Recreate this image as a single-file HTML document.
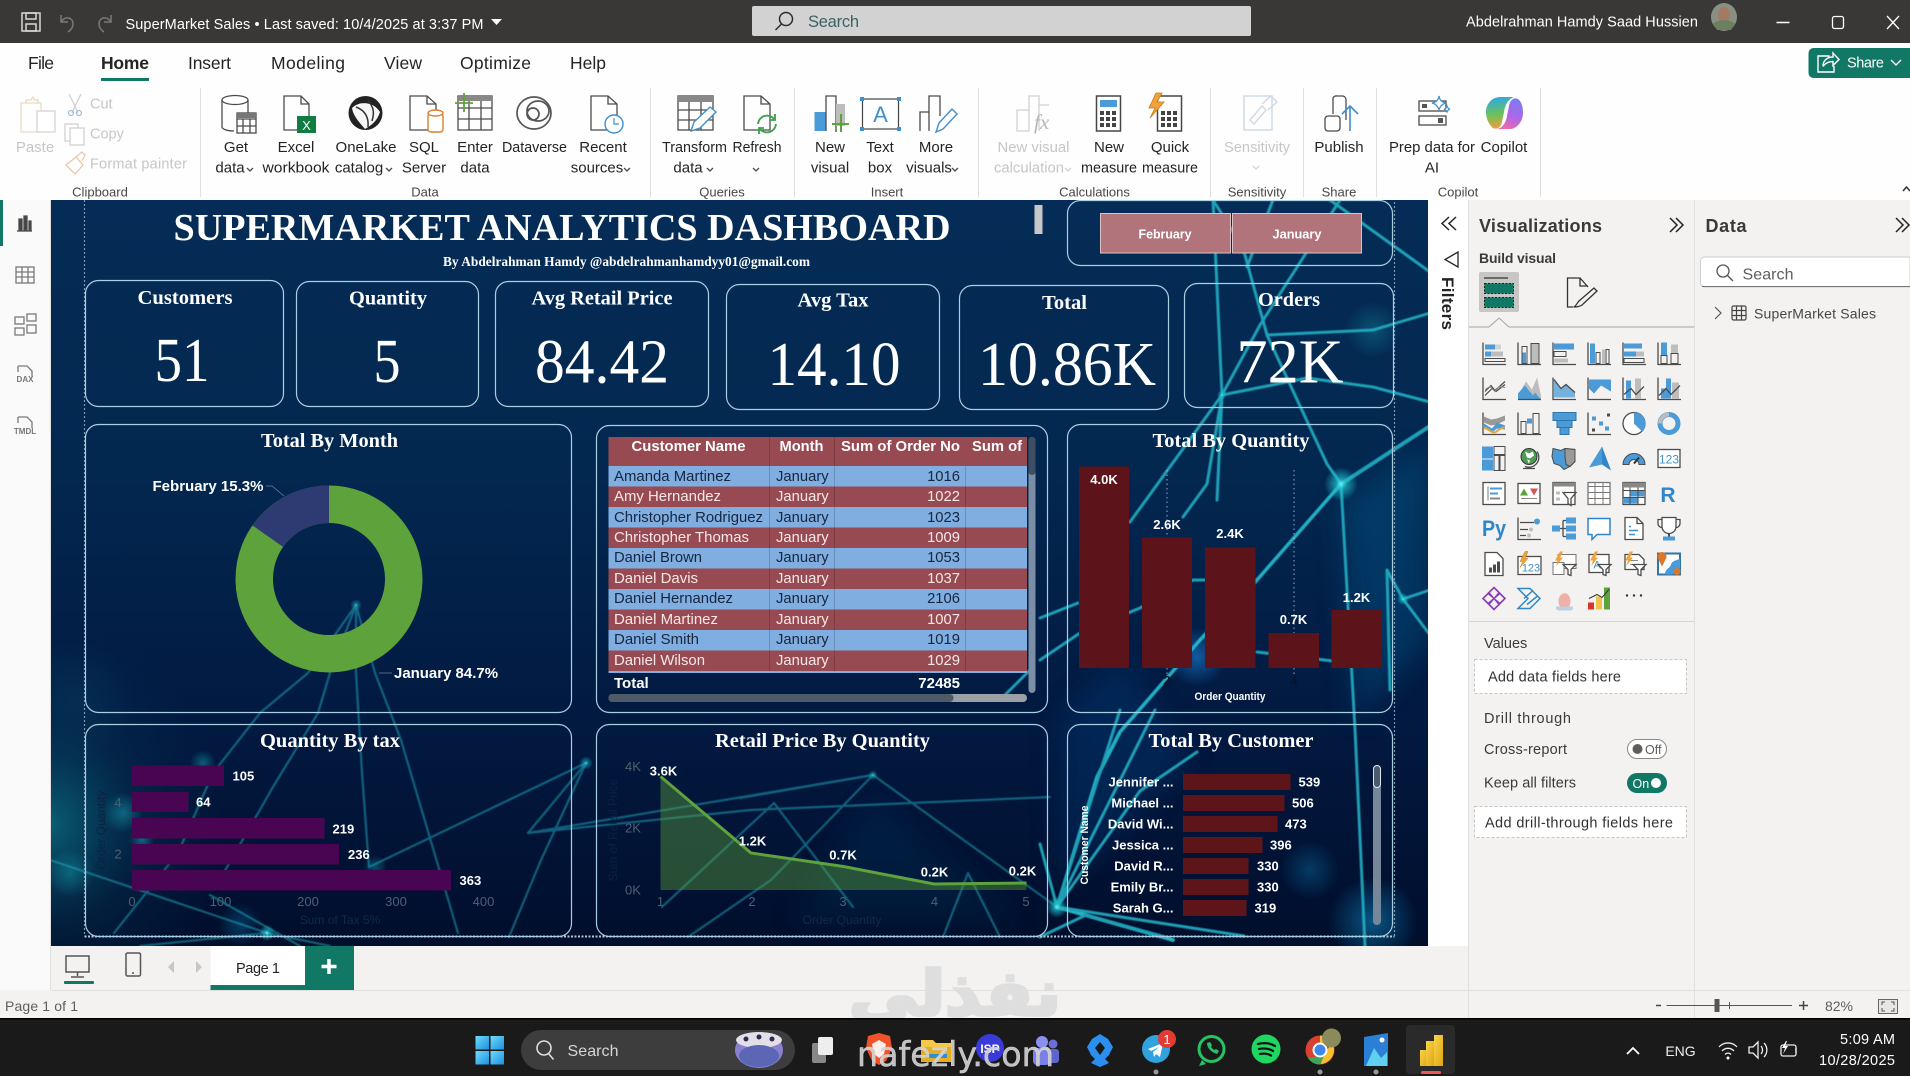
<!DOCTYPE html>
<html lang="en"><head><meta charset="utf-8"><title>SuperMarket Sales - Power BI</title>
<style>
html,body{margin:0;padding:0;background:#f3f2f1;overflow:hidden}
svg{display:block}
text{font-family:"Liberation Sans","Noto Sans CJK SC",sans-serif;fill:#252423}
.se{font-family:"Liberation Serif",serif;fill:#fff}
.seb{font-family:"Liberation Serif",serif;font-weight:700;fill:#fff}
.lb{font-weight:700;fill:#fff;font-size:13px}
.rb{font-size:15px;text-anchor:middle;fill:#252423}
.rd{font-size:15px;text-anchor:middle;fill:#c8c6c4}
.gl{font-size:13px;text-anchor:middle;fill:#484644}
.ax{font-size:13px;fill:#4c6172;text-anchor:middle}
.tn{font-size:14.8px;fill:#16263f}.tw{font-size:14.8px;fill:#f6e8e8}
.th{font-size:14.5px;font-weight:700;fill:#fff}
.e{text-anchor:end}.m{text-anchor:middle}
.b{fill:#4a9bd8}.g{fill:#bdbdbd}.dk{fill:#4b4b4b}
.k{fill:none;stroke:#4b4b4b;stroke-width:1.3}
.kb{fill:none;stroke:#3f8fcc;stroke-width:1.5}
.dis{fill:none;stroke:#d3d1cf;stroke-width:1.3}
.n{fill:none;stroke:#22aec2;stroke-linecap:round;stroke-linejoin:round}
.cd{fill:none;stroke:#a9cfe2;stroke-width:1.2}
</style></head><body>
<svg xmlns="http://www.w3.org/2000/svg" width="1910" height="1076" viewBox="0 0 1910 1076">
<defs>
<linearGradient id="bg" x1="0" y1="0" x2="0" y2="1"><stop offset="0" stop-color="#052c56"/><stop offset=".35" stop-color="#032850"/><stop offset=".68" stop-color="#021a42"/><stop offset="1" stop-color="#010e2c"/></linearGradient>
<radialGradient id="tl" cx="0" cy=".75" r=".42"><stop offset="0" stop-color="#0a6a7c" stop-opacity=".85"/><stop offset=".5" stop-color="#064a66" stop-opacity=".25"/><stop offset="1" stop-color="#03305a" stop-opacity="0"/></radialGradient>
<radialGradient id="glow"><stop offset="0" stop-color="#19b4c4" stop-opacity=".8"/><stop offset="1" stop-color="#19b4c4" stop-opacity="0"/></radialGradient>
<radialGradient id="glow2"><stop offset="0" stop-color="#0b6da0" stop-opacity=".75"/><stop offset="1" stop-color="#0b6da0" stop-opacity="0"/></radialGradient>
<radialGradient id="bl"><stop offset="0" stop-color="#1c86e0" stop-opacity=".85"/><stop offset="1" stop-color="#1c86e0" stop-opacity="0"/></radialGradient>
<radialGradient id="hot"><stop offset="0" stop-color="#5ff3f5"/><stop offset=".3" stop-color="#22c3cf" stop-opacity=".7"/><stop offset="1" stop-color="#22c3cf" stop-opacity="0"/></radialGradient>
<linearGradient id="cop" x1="0.3" y1="0" x2="0.4" y2="1"><stop offset="0" stop-color="#2ea7e8"/><stop offset=".55" stop-color="#6bc25a"/><stop offset="1" stop-color="#f59b3c"/></linearGradient>
<linearGradient id="cop2" x1="0.7" y1="0" x2="0.3" y2="1"><stop offset="0" stop-color="#7a7cf0"/><stop offset=".55" stop-color="#b065e8"/><stop offset="1" stop-color="#f06aa8"/></linearGradient>
<linearGradient id="win" x1="0" y1="0" x2="1" y2="1"><stop offset="0" stop-color="#6fdcf8"/><stop offset="1" stop-color="#1b8fe0"/></linearGradient>
<linearGradient id="pbi" x1="0" y1="0" x2="1" y2="1"><stop offset="0" stop-color="#f7d64a"/><stop offset="1" stop-color="#e2a412"/></linearGradient>
<filter id="sf" x="-5%" y="-5%" width="110%" height="110%"><feGaussianBlur stdDeviation=".55"/></filter>
<filter id="wash" x="-20%" y="-20%" width="140%" height="140%"><feGaussianBlur stdDeviation="14"/></filter>
<path id="ax" d="M1 1V23H24" fill="none" stroke="#4b4b4b" stroke-width="1.3"/>
<clipPath id="cv"><rect x="51" y="200" width="1377" height="746"/></clipPath>
</defs>

<!-- base panels -->
<rect width="1910" height="1076" fill="#f3f2f1"/>
<rect y="0" width="1910" height="43" fill="#3a3837"/>
<rect y="43" width="1910" height="157" fill="#fefefe"/>
<rect x="0" y="200" width="51" height="790" fill="#fafafa"/>
<rect x="1428" y="200" width="40" height="746" fill="#fff"/>
<path d="M1468.5 200V1018M1694.5 200V1018M50.5 200V990" stroke="#e1dfdd"/>

<!-- title bar -->
<g fill="none" stroke="#d8d8d8" stroke-width="1.5"><rect x="22" y="13" width="18" height="18"/><rect x="26" y="13" width="10" height="6"/><rect x="26" y="24" width="10" height="7"/></g>
<g fill="none" stroke="#7b7977" stroke-width="1.5"><path d="M61 15v7h7M62 21c3-5 11-4 11 3 0 3-2 6-5 8"/><path d="M111 15v7h-7M110 21c-3-5-11-4-11 3 0 3 2 6 5 8"/></g>
<text x="125.5" y="29" font-size="14.5" style="fill:#fff" textLength="358">SuperMarket Sales • Last saved: 10/4/2025 at 3:37 PM</text>
<path d="M491 19h11l-5.500 6z" fill="#fff"/>
<rect x="752" y="6" width="499" height="30" rx="2" fill="#d2d2d2"/>
<g fill="none" stroke="#2d2d2d" stroke-width="1.5"><circle cx="786" cy="19" r="6.500"/><path d="M781.500 24l-6 6"/></g>
<text x="808" y="27" font-size="16.5" style="fill:#3c6262" textLength="51">Search</text>
<text x="1466" y="26.500" font-size="14.500" style="fill:#fff" textLength="232">Abdelrahman Hamdy Saad Hussien</text>
<ellipse cx="1724" cy="17" rx="13" ry="14" fill="#8a8f83"/><ellipse cx="1724" cy="15" rx="6" ry="8" fill="#a57a63"/><path d="M1713 24c3-5 19-5 22 0l-4 6h-14z" fill="#6a8060"/>
<path d="M1776.500 22.500h13" stroke="#fff" stroke-width="1.500"/>
<rect x="1832.500" y="16.500" width="11" height="12" rx="2" fill="none" stroke="#fff" stroke-width="1.300"/>
<path d="M1887 16l12 13M1899 16l-12 13" stroke="#fff" stroke-width="1.300"/>

<!-- tabs -->
<g font-size="17.500">
<text x="28" y="69" textLength="26">File</text>
<text x="101" y="69" textLength="48" font-weight="700">Home</text>
<text x="188" y="69" textLength="43">Insert</text>
<text x="271" y="69" textLength="74">Modeling</text>
<text x="384" y="69" textLength="38">View</text>
<text x="460" y="69" textLength="71">Optimize</text>
<text x="570" y="69" textLength="36">Help</text>
</g>
<rect x="101" y="78" width="48" height="3" fill="#117865"/>
<path d="M1808.500 53a5 5 0 0 1 5-5H1910v30h-96.500a5 5 0 0 1-5-5z" fill="#117865"/>
<g fill="none" stroke="#fff" stroke-width="1.400"><path d="M1829 57v-1h-11v16h16v-6"/><path d="M1823 66c0-6 5-9 10-9v-4l6 6.500-6 6v-4c-5 0-8 2-10 5"/><path d="M1891 60l5 5 5-5"/></g>
<text x="1847" y="67.500" font-size="14.500" style="fill:#fff" textLength="37">Share</text>

<!-- ribbon separators -->
<path d="M200.500 88v109M650.500 88v109M794.500 88v109M978.500 88v109M1210.500 88v109M1303.500 88v109M1376.500 88v109M1540.500 88v109" stroke="#e1dfdd"/>
<!-- group labels -->
<text class="gl" x="100" y="196.500">Clipboard</text><text class="gl" x="425" y="196.500">Data</text><text class="gl" x="722" y="196.500">Queries</text><text class="gl" x="887" y="196.500">Insert</text><text class="gl" x="1094.500" y="196.500">Calculations</text><text class="gl" x="1257" y="196.500">Sensitivity</text><text class="gl" x="1339" y="196.500">Share</text><text class="gl" x="1458" y="196.500">Copilot</text>

<!-- ribbon: clipboard -->
<g class="dis"><rect x="21" y="103" width="20" height="29" style="stroke:#ecdcc4"/><rect x="37" y="111" width="18" height="21" style="stroke:#d6d4d2;fill:#fff"/><path d="M26 103v-3h5l2-3 2 3h3v3" style="stroke:#e9d9c0"/></g>
<text class="rd" x="35" y="152">Paste</text>
<g class="dis"><path d="M69 94l6 12 6-12M75 106l-3 7M75 106l3 7"/><circle cx="71" cy="113" r="2.500" style="stroke:#9dc3e0"/><circle cx="79" cy="113" r="2.500" style="stroke:#9dc3e0"/></g>
<text x="90" y="108.500" font-size="14.500" style="fill:#c8c6c4">Cut</text>
<g class="dis"><rect x="65" y="124" width="13" height="17"/><rect x="70" y="128" width="14" height="17" style="fill:#fff"/></g>
<text x="90" y="138.500" font-size="14.500" style="fill:#c8c6c4">Copy</text>
<g class="dis"><path d="M66 165l10-8 7 8-8 9zM76 157l6-5 3 3-3 6" style="stroke:#e4c9a8"/></g>
<text x="90" y="168.500" font-size="14.500" style="fill:#c8c6c4" textLength="97">Format painter</text>

<!-- data group icons -->
<g class="k"><ellipse cx="235" cy="100" rx="13" ry="4.500"/><path d="M222 100v27c0 2 5 4 12 4M248 100v13"/><rect x="237" y="113" width="19" height="20" fill="#fff"/><path d="M237 119h19M237 126h19M243 119v14M250 119v14"/><rect x="237" y="113" width="19" height="5" fill="#777" stroke="none"/></g>
<text class="rb" x="236" y="152">Get</text><text class="rb" x="230" y="172.500">data</text><path d="M247 168l3 3 3-3" class="k"/>
<g class="k"><path d="M284 96h17l8 8v26h-25zM301 96v8h8"/></g><rect x="297" y="116" width="19" height="17" fill="#107c41"/><text x="306.500" y="130" font-size="13" class="m" style="fill:#fff">X</text>
<text class="rb" x="296" y="152">Excel</text><text class="rb" x="296" y="172.500" textLength="67" lengthAdjust="spacingAndGlyphs">workbook</text>
<circle cx="365.500" cy="113" r="17" fill="#222"/><path d="M352 108c8-8 22-6 28 4-3 10-10 14-15 17-5-6-12-13-13-21z" fill="#f6f6f6"/><path d="M356 107c8 3 13 9 12 20M368 100c5 7 7 11 4 21" stroke="#333" stroke-width="1.500" fill="none"/>
<text class="rb" x="366" y="152">OneLake</text><text class="rb" x="359" y="172.500">catalog</text><path d="M386 168l3 3 3-3" class="k"/>
<g class="k"><path d="M410 96h17l9 8v26h-26zM427 96v8h9"/></g><g fill="#fff" stroke="#d9822b" stroke-width="1.400"><rect x="428" y="113" width="15" height="19" rx="3"/><ellipse cx="435.500" cy="113" rx="7.500" ry="3"/></g>
<text class="rb" x="424" y="152">SQL</text><text class="rb" x="424" y="172.500">Server</text>
<g class="k"><rect x="458" y="96" width="34" height="34"/><path d="M458 108h34M458 119h34M469 96v34M481 96v34"/></g><rect x="458" y="96" width="34" height="5" fill="#8a8886"/><path d="M464 93v19M455 103h18" stroke="#5ea23b" stroke-width="1.800"/>
<text class="rb" x="475" y="152">Enter</text><text class="rb" x="475" y="172.500">data</text>
<g fill="none" stroke="#555" stroke-width="1.700"><ellipse cx="534" cy="113" rx="17" ry="16"/><ellipse cx="538" cy="111" rx="11" ry="10"/><ellipse cx="533" cy="114" rx="6" ry="6"/></g>
<text class="rb" x="534.500" y="152" textLength="65" lengthAdjust="spacingAndGlyphs">Dataverse</text>
<g class="k"><path d="M591 96h17l9 8v26h-26zM608 96v8h9"/></g><circle cx="614" cy="124" r="9" fill="#fff" stroke="#3f8fcc" stroke-width="1.400"/><path d="M614 118v6h5" stroke="#3f8fcc" fill="none" stroke-width="1.200"/>
<text class="rb" x="603" y="152">Recent</text><text class="rb" x="597" y="172.500">sources</text><path d="M624 168l3 3 3-3" class="k"/>
<!-- queries -->
<g class="k"><rect x="678" y="96" width="35" height="34"/><path d="M678 110h35M678 120h35M689 102v28M701 102v28"/></g><rect x="678" y="96" width="35" height="6" fill="#8a8886"/><path d="M691 131l3-9 16-15 6 5-16 16z" fill="#fff" stroke="#3f8fcc" stroke-width="1.400"/>
<text class="rb" x="694.500" y="152" textLength="65" lengthAdjust="spacingAndGlyphs">Transform</text><text class="rb" x="688" y="172.500">data</text><path d="M707 168l3 3 3-3" class="k"/>
<g class="k"><path d="M744 96h17l9 8v26h-26zM761 96v8h9"/></g><g fill="none" stroke="#3aa14a" stroke-width="1.800"><path d="M758 124a9 9 0 0 1 16-5M776 124a9 9 0 0 1-16 5"/><path d="M775 114v6h-5M759 134v-6h5"/></g>
<text class="rb" x="757" y="152" textLength="49" lengthAdjust="spacingAndGlyphs">Refresh</text><path d="M753 168l3 3 3-3" class="k"/>
<!-- insert -->
<rect x="814.500" y="112" width="12" height="19" fill="#4a9bd8"/><g class="k"><path d="M826 131V96h10v36"/></g><rect x="836" y="104" width="9" height="22" fill="#bdbdbd"/><path d="M841 114v18M832 124h17" stroke="#5ea23b" stroke-width="2"/>
<text class="rb" x="830" y="152">New</text><text class="rb" x="830" y="172.500">visual</text>
<rect x="862.500" y="99" width="36" height="30" fill="#fff" stroke="#444" stroke-width="1.200"/><g fill="#3f8fcc"><rect x="860" y="97" width="4" height="4"/><rect x="897" y="97" width="4" height="4"/><rect x="860" y="127" width="4" height="4"/><rect x="897" y="127" width="4" height="4"/></g>
<text x="880.500" y="122" font-size="22" class="m" style="fill:#3f8fcc">A</text>
<text class="rb" x="880" y="152">Text</text><text class="rb" x="880" y="172.500">box</text>
<g class="k"><path d="M920 131v-19h9M929 131V96h11v20"/></g><path d="M936 132l3-9 13-14 5 5-14 15z" fill="#fff" stroke="#3f8fcc" stroke-width="1.400"/>
<text class="rb" x="936" y="152">More</text><text class="rb" x="929" y="172.500">visuals</text><path d="M952 168l3 3 3-3" class="k"/>
<!-- calculations -->
<g class="dis"><path d="M1017 131v-21h12v21zM1029 110V96h10v35M1039 105h10"/></g><text x="1034" y="129" font-size="21" class="se" font-style="italic" style="fill:#b8b6b4">fx</text>
<text class="rd" x="1033.500" y="152" textLength="72" lengthAdjust="spacingAndGlyphs">New visual</text><text class="rd" x="1029" y="172.500" textLength="70" lengthAdjust="spacingAndGlyphs">calculation</text><path d="M1065 168l3 3 3-3" class="dis"/>
<g><rect x="1096.500" y="96" width="24" height="35" fill="#fff" stroke="#484644" stroke-width="1.500"/><rect x="1100" y="100" width="17" height="7" fill="#4a9bd8"/><g fill="#444"><rect x="1100" y="111" width="4" height="4"/><rect x="1106" y="111" width="4" height="4"/><rect x="1112" y="111" width="4" height="4"/><rect x="1100" y="117" width="4" height="4"/><rect x="1106" y="117" width="4" height="4"/><rect x="1112" y="117" width="4" height="4"/><rect x="1100" y="123" width="4" height="4"/><rect x="1106" y="123" width="4" height="4"/><rect x="1112" y="123" width="4" height="4"/></g></g>
<text class="rb" x="1109" y="152">New</text><text class="rb" x="1109" y="172.500" textLength="56" lengthAdjust="spacingAndGlyphs">measure</text>
<g><rect x="1157.500" y="96" width="24" height="35" fill="#fff" stroke="#484644" stroke-width="1.500"/><g fill="#444"><rect x="1161" y="111" width="4" height="4"/><rect x="1167" y="111" width="4" height="4"/><rect x="1173" y="111" width="4" height="4"/><rect x="1161" y="117" width="4" height="4"/><rect x="1167" y="117" width="4" height="4"/><rect x="1173" y="117" width="4" height="4"/><rect x="1161" y="123" width="4" height="4"/><rect x="1167" y="123" width="4" height="4"/><rect x="1173" y="123" width="4" height="4"/></g><path d="M1156 93l-7 15h6l-5 10 14-16h-7l5-9z" fill="#f2a23c" stroke="#c87a14" stroke-width=".8"/></g>
<text class="rb" x="1170" y="152">Quick</text><text class="rb" x="1170" y="172.500" textLength="56" lengthAdjust="spacingAndGlyphs">measure</text>
<!-- sensitivity -->
<g fill="none" stroke="#cfdbe6" stroke-width="1.500"><rect x="1244" y="96" width="28" height="34"/><path d="M1250 120l12-14 4 4-12 14zM1262 104l9-8 6 6-9 8"/></g>
<text class="rd" x="1257" y="152" textLength="66" lengthAdjust="spacingAndGlyphs">Sensitivity</text><path d="M1253 166l3 3 3-3" class="dis"/>
<!-- share -->
<g class="k"><path d="M1333 114V98a4 4 0 0 1 4-2h6a4 4 0 0 1 3 4v20"/><rect x="1325" y="116" width="15" height="15" rx="3"/></g><path d="M1350 131v-25M1342 114l8-8 8 8" fill="none" stroke="#3f8fcc" stroke-width="1.600"/>
<text class="rb" x="1339" y="152">Publish</text>
<!-- copilot -->
<g class="k"><rect x="1419" y="101" width="27" height="10"/><rect x="1419" y="116" width="27" height="9"/></g><rect x="1422" y="104" width="5" height="4" fill="#555"/><rect x="1438" y="118" width="5" height="5" fill="#555"/><path d="M1439 96c1 5 3 6 7 7-4 1-6 3-7 7-1-4-3-6-7-7 4-1 6-2 7-7zM1447 106c.6 2 1.500 3 3 3-1.500.6-2.400 1.500-3 3-.6-1.500-1.500-2.400-3-3 1.500 0 2.400-1 3-3z" fill="#fff" stroke="#3f8fcc" stroke-width="1.200"/>
<text class="rb" x="1432" y="152" textLength="86" lengthAdjust="spacingAndGlyphs">Prep data for</text><text class="rb" x="1432" y="172.500">AI</text>
<path d="M1500 97H1514C1508 99 1505 105 1504 112L1502 122C1501 127 1497 130 1493 128 1488 124 1486 117 1486 112 1486 104 1492 97 1500 97z" fill="url(#cop)"/>
<path d="M1510 129H1497C1503 128 1506 122 1507 116L1509 106C1510 100 1514 97 1518 99 1522 102 1523 108 1523 113 1523 121 1517 129 1510 129z" fill="url(#cop2)"/>
<text class="rb" x="1504" y="152">Copilot</text>
<path d="M1903 191l3.500-4 3.500 4" fill="none" stroke="#333" stroke-width="1.500"/>

<!-- left nav -->
<rect x="0" y="200" width="3" height="46" fill="#117865"/>
<g class="k"><path d="M17 231h15"/><path d="M19 219h3v11h-3zM24 216h3v14h-3zM29 221h2v9h-2z" fill="#444"/></g>
<g class="k" style="stroke:#7a7a7a"><rect x="16" y="267" width="18" height="16"/><path d="M16 272h18M16 277h18M22 267v16M28 267v16"/></g>
<g class="k" style="stroke:#7a7a7a"><rect x="15" y="317" width="9" height="7"/><rect x="27" y="314" width="9" height="7"/><rect x="15" y="328" width="9" height="7"/><rect x="27" y="325" width="9" height="8"/></g>
<g class="k" style="stroke:#7a7a7a"><path d="M18 366h9l5 5v6M18 366v6"/></g><text x="25" y="382" font-size="8" class="m" font-weight="700" style="fill:#777">DAX</text>
<g class="k" style="stroke:#7a7a7a"><path d="M18 417h9l5 5v6M18 417v6"/></g><text x="25" y="434" font-size="8" class="m" font-weight="700" style="fill:#777">TMDL</text>

<!-- CANVAS -->
<g clip-path="url(#cv)">
<rect x="51" y="200" width="1377" height="746" fill="url(#bg)"/>
<rect x="51" y="460" width="420" height="486" fill="url(#tl)"/>
<!-- soft colour washes -->
<g filter="url(#wash)">
<path d="M1341 500L1428 450V640L1355 720z" fill="#0d6aa0" opacity=".3"/>
<path d="M1057 890L1190 760 1120 660 1060 720V880z" fill="#0650a0" opacity=".22"/>
<path d="M873 800L1020 920 790 920z" fill="#0b5f8a" opacity=".12"/>
</g>
<circle cx="1373" cy="921" r="45" fill="url(#glow2)"/>
<circle cx="1310" cy="870" r="30" fill="url(#glow2)" opacity=".6"/>
<circle cx="1197" cy="657" r="30" fill="url(#bl)" opacity=".7"/>
<circle cx="1373" cy="330" r="28" fill="url(#glow)" opacity=".35"/>
<circle cx="203" cy="763" r="13" fill="url(#glow)" opacity=".55"/><circle cx="123" cy="813" r="20" fill="url(#glow)" opacity=".55"/><circle cx="142" cy="840" r="12" fill="url(#glow)" opacity=".6"/><circle cx="70" cy="873" r="24" fill="url(#glow)" opacity=".45"/><circle cx="75" cy="700" r="60" fill="url(#glow)" opacity=".1"/><circle cx="240" cy="925" r="22" fill="url(#glow2)" opacity=".6"/><circle cx="375" cy="867" r="12" fill="url(#glow)" opacity=".45"/>
<!-- network right -->
<g class="n" stroke-width="3" opacity=".9" filter="url(#sf)">
<path d="M1341 484L1430 426" stroke-width="4"/>
<path d="M1341 484L1257 580 1200 640 1120 732 1097 777 1057 907" stroke-width="3.600" style="stroke:#28bfd0"/>
<path d="M1341 484L1327 464 1267 335 1243 248 1213 200"/>
<path d="M1341 484L1355 729 1365 946"/>
<path d="M1387 570L1403 599 1430 635M1403 599L1430 590M1387 570L1390 690"/>
<path d="M1222 395L1307 378 1373 387 1430 402"/>
<path d="M1222 395L1130 522M1222 395L1260 325 1340 200M1222 395L1207 484 1183 517M1222 395L1213 200M1222 395L1217 500"/>
<path d="M1040 618L1078 603M1040 660L1080 633 1140 608 1193 580 1250 580"/>
<path d="M1273 200L1247 267M1330 200L1430 272M1373 330L1430 313M1373 330L1267 335"/>
<path d="M1057 907L1173 940" stroke-width="3.800" style="stroke:#2cc6d6"/>
<path d="M1057 907L1040 844M1057 907L1140 791 1197 752M1057 907L1155 710M1057 907L1120 710M1057 907L1244 936"/>
<path d="M1257 652L1333 661M1086 915L1040 937M1086 915L1165 937M1000 700L1030 670"/>
</g>
<!-- network left/centre -->
<g class="n" stroke-width="2.200" opacity=".5" filter="url(#sf)">
<path d="M356 605L308 673 260 713 213 773 178 853 114 933"/>
<path d="M356 605L330 673 318 713 273 787 215 888"/>
<path d="M356 605L356 673 362 773 369 867"/>
<path d="M356 605L375 673 401 740 458 933"/>
<path d="M586 763L528 833M586 763L369 867M586 763L541 860 509 937"/>
<path d="M528 833L873 775M528 833L750 810 1050 797"/>
<path d="M873 775L740 798M873 775L771 880 688 937M873 775L1057 907"/>
<path d="M774 803L662 907M774 803L853 907M968 873L943 937M968 873L1000 937"/>
<path d="M50 860L267 933M267 933L140 946M267 933L330 946M210 895L300 946"/>
</g>
<circle cx="1341" cy="484" r="17" fill="url(#hot)"/><circle cx="1057" cy="907" r="11" fill="url(#hot)"/><circle cx="873" cy="775" r="5" fill="url(#hot)" opacity=".7"/><circle cx="586" cy="763" r="7" fill="url(#hot)" opacity=".7"/><circle cx="356" cy="605" r="6" fill="url(#hot)" opacity=".6"/><circle cx="1222" cy="395" r="5" fill="url(#hot)"/><circle cx="267" cy="933" r="8" fill="url(#hot)"/><circle cx="1403" cy="599" r="6" fill="url(#hot)"/>

<!-- dotted page bounds -->
<path d="M84.500 200V936M1394.500 936V200" fill="none" stroke="#a9b8c6" stroke-width="1.200" stroke-dasharray="2 2" opacity=".75"/>
<path d="M84.500 936.500H1394.500" fill="none" stroke="#b9c4cf" stroke-width="2" stroke-dasharray="2 1.500"/>

<!-- cards -->
<g class="cd">
<rect x="85.500" y="280.500" width="198" height="126" rx="13"/>
<rect x="296.500" y="281.500" width="182" height="125" rx="13"/>
<rect x="495.500" y="281.500" width="213" height="125" rx="13"/>
<rect x="726.500" y="284.500" width="213" height="125" rx="13"/>
<rect x="959.500" y="285.500" width="209" height="124" rx="13"/>
<rect x="1184.500" y="283.500" width="209" height="124" rx="13"/>
<rect x="85.500" y="424.500" width="486" height="288" rx="13"/>
<rect x="596.500" y="425.500" width="451" height="287" rx="13"/>
<rect x="1067.500" y="424.500" width="325" height="288" rx="13"/>
<rect x="1067.500" y="200.500" width="325" height="65" rx="13"/>
<rect x="85.500" y="724.500" width="486" height="212" rx="13"/>
<rect x="596.500" y="724.500" width="451" height="212" rx="13"/>
<rect x="1067.500" y="724.500" width="325" height="212" rx="13"/>
</g>

<!-- title -->
<text class="seb" x="173.500" y="240" font-size="38" textLength="777" lengthAdjust="spacingAndGlyphs">SUPERMARKET ANALYTICS DASHBOARD</text>
<text class="seb" x="443" y="266" font-size="14" textLength="367" lengthAdjust="spacingAndGlyphs">By Abdelrahman Hamdy @abdelrahmanhamdyy01@gmail.com</text>
<rect x="1034.500" y="205" width="8" height="29" fill="#c8c8c8"/>
<rect x="1100.500" y="213.500" width="130" height="39.500" fill="#b1747a" stroke="#d9c3c6"/>
<rect x="1232.500" y="213.500" width="129" height="39.500" fill="#b1747a" stroke="#d9c3c6"/>
<text class="lb m" x="1165" y="238.500" textLength="53" lengthAdjust="spacingAndGlyphs">February</text>
<text class="lb m" x="1297" y="238.500" textLength="49" lengthAdjust="spacingAndGlyphs">January</text>

<!-- KPI -->
<text class="seb m" x="185" y="304" font-size="20" textLength="95" lengthAdjust="spacingAndGlyphs">Customers</text>
<text class="seb m" x="388" y="304.500" font-size="20" textLength="78" lengthAdjust="spacingAndGlyphs">Quantity</text>
<text class="seb m" x="602" y="304.500" font-size="20" textLength="141" lengthAdjust="spacingAndGlyphs">Avg Retail Price</text>
<text class="seb m" x="833" y="306.500" font-size="20" textLength="71" lengthAdjust="spacingAndGlyphs">Avg Tax</text>
<text class="seb m" x="1064.500" y="309" font-size="20" textLength="45" lengthAdjust="spacingAndGlyphs">Total</text>
<text class="seb m" x="1289" y="306" font-size="20" textLength="62" lengthAdjust="spacingAndGlyphs">Orders</text>
<text class="se m" x="182" y="381" font-size="62" textLength="55" lengthAdjust="spacingAndGlyphs">51</text>
<text class="se m" x="387" y="382" font-size="62" textLength="27" lengthAdjust="spacingAndGlyphs">5</text>
<text class="se m" x="602" y="382.500" font-size="62" textLength="134" lengthAdjust="spacingAndGlyphs">84.42</text>
<text class="se m" x="834" y="385" font-size="62" textLength="133" lengthAdjust="spacingAndGlyphs">14.10</text>
<text class="se m" x="1067" y="385" font-size="62" textLength="178" lengthAdjust="spacingAndGlyphs">10.86K</text>
<text class="se m" x="1290" y="382.500" font-size="62" textLength="107" lengthAdjust="spacingAndGlyphs">72K</text>

<!-- donut -->
<text class="seb m" x="329.500" y="447" font-size="20" textLength="137" lengthAdjust="spacingAndGlyphs">Total By Month</text>
<circle cx="329" cy="579" r="74.750" fill="none" stroke="#5ea23b" stroke-width="37.500"/>
<path d="M329 485.500A93.500 93.500 0 0 0 252.400 525.400L283.100 546.900A56 56 0 0 1 329 523z" fill="#2e3a72"/>
<path d="M266 486H272L284 496M379 673H392" fill="none" stroke="#6d8297" stroke-width=".8"/>
<text class="lb" x="152.500" y="491" style="font-size:15px" textLength="111" lengthAdjust="spacingAndGlyphs">February 15.3%</text>
<text class="lb" x="394" y="678" style="font-size:15px" textLength="104" lengthAdjust="spacingAndGlyphs">January 84.7%</text>

<!-- table -->
<rect x="608.500" y="437" width="418.500" height="29" fill="#984a52"/>
<g>
<rect x="608.500" y="466" width="418.500" height="20.500" fill="#80aee0"/><rect x="608.500" y="486.500" width="418.500" height="20.500" fill="#984a52"/>
<rect x="608.500" y="507" width="418.500" height="20.500" fill="#80aee0"/><rect x="608.500" y="527.500" width="418.500" height="20.500" fill="#984a52"/>
<rect x="608.500" y="548" width="418.500" height="20.500" fill="#80aee0"/><rect x="608.500" y="568.500" width="418.500" height="20.500" fill="#984a52"/>
<rect x="608.500" y="589" width="418.500" height="20.500" fill="#80aee0"/><rect x="608.500" y="609.500" width="418.500" height="20.500" fill="#984a52"/>
<rect x="608.500" y="630" width="418.500" height="20.500" fill="#80aee0"/><rect x="608.500" y="650.500" width="418.500" height="20.500" fill="#984a52"/>
<rect x="608.500" y="671" width="418.500" height="2" fill="#80aee0"/>
</g>
<path d="M769.500 437V671M834.500 437V671M965.500 466V671" stroke="#000" stroke-opacity=".18"/>
<text class="th m" x="688.500" y="451" textLength="114" lengthAdjust="spacingAndGlyphs">Customer Name</text>
<text class="th m" x="801.500" y="451" textLength="44" lengthAdjust="spacingAndGlyphs">Month</text>
<text class="th e" x="960" y="451" textLength="119" lengthAdjust="spacingAndGlyphs">Sum of Order No</text>
<text class="th" x="972" y="451" textLength="50" lengthAdjust="spacingAndGlyphs">Sum of</text>
<g>
<text class="tn" x="614" y="481" textLength="117" lengthAdjust="spacingAndGlyphs">Amanda Martinez</text><text class="tn" x="776" y="481">January</text><text class="tn e" x="960" y="481">1016</text>
<text class="tw" x="614" y="501" textLength="107" lengthAdjust="spacingAndGlyphs">Amy Hernandez</text><text class="tw" x="776" y="501">January</text><text class="tw e" x="960" y="501">1022</text>
<text class="tn" x="614" y="522" textLength="149" lengthAdjust="spacingAndGlyphs">Christopher Rodriguez</text><text class="tn" x="776" y="522">January</text><text class="tn e" x="960" y="522">1023</text>
<text class="tw" x="614" y="542" textLength="135" lengthAdjust="spacingAndGlyphs">Christopher Thomas</text><text class="tw" x="776" y="542">January</text><text class="tw e" x="960" y="542">1009</text>
<text class="tn" x="614" y="562" textLength="88" lengthAdjust="spacingAndGlyphs">Daniel Brown</text><text class="tn" x="776" y="562">January</text><text class="tn e" x="960" y="562">1053</text>
<text class="tw" x="614" y="583" textLength="84" lengthAdjust="spacingAndGlyphs">Daniel Davis</text><text class="tw" x="776" y="583">January</text><text class="tw e" x="960" y="583">1037</text>
<text class="tn" x="614" y="603" textLength="119" lengthAdjust="spacingAndGlyphs">Daniel Hernandez</text><text class="tn" x="776" y="603">January</text><text class="tn e" x="960" y="603">2106</text>
<text class="tw" x="614" y="624" textLength="104" lengthAdjust="spacingAndGlyphs">Daniel Martinez</text><text class="tw" x="776" y="624">January</text><text class="tw e" x="960" y="624">1007</text>
<text class="tn" x="614" y="644" textLength="85" lengthAdjust="spacingAndGlyphs">Daniel Smith</text><text class="tn" x="776" y="644">January</text><text class="tn e" x="960" y="644">1019</text>
<text class="tw" x="614" y="665" textLength="91" lengthAdjust="spacingAndGlyphs">Daniel Wilson</text><text class="tw" x="776" y="665">January</text><text class="tw e" x="960" y="665">1029</text>
</g>
<text class="th" x="614" y="688" style="font-size:15px">Total</text><text class="th e" x="960" y="688" style="font-size:15px">72485</text>
<rect x="608.500" y="694" width="418.500" height="8" rx="4" fill="#9aa0a6"/><rect x="608.500" y="694" width="345" height="8" rx="4" fill="#4d5b68"/>
<rect x="1028.500" y="437" width="7" height="256" rx="3.500" fill="#7b8ea5"/><rect x="1028.500" y="437" width="7" height="38" rx="3.500" fill="#3f4e60"/>

<!-- total by quantity -->
<text class="seb m" x="1231" y="447" font-size="20" textLength="157" lengthAdjust="spacingAndGlyphs">Total By Quantity</text>
<path d="M1167 470V680M1294 470V680" stroke="#c8d4df" stroke-dasharray="1.500 3" opacity=".75"/>
<g fill="#5c1319"><rect x="1079" y="466.500" width="50" height="201.500"/><rect x="1142" y="537.500" width="50" height="130.500"/><rect x="1205" y="547.500" width="50.500" height="120.500"/><rect x="1268.500" y="633" width="50.500" height="35"/><rect x="1331.500" y="610" width="50" height="58"/></g>
<text class="lb m" x="1104" y="484">4.0K</text><text class="lb m" x="1167" y="529">2.6K</text><text class="lb m" x="1230" y="538">2.4K</text><text class="lb m" x="1293.500" y="624">0.7K</text><text class="lb m" x="1356.500" y="602">1.2K</text>
<text x="1167" y="685" font-size="13" font-weight="700" class="m" style="fill:#07132a">2</text><text x="1294" y="685" font-size="13" font-weight="700" class="m" style="fill:#07132a">4</text>
<text class="lb m" x="1230" y="700" style="font-size:11px" textLength="71" lengthAdjust="spacingAndGlyphs">Order Quantity</text>

<!-- quantity by tax -->
<text class="seb m" x="330" y="747" font-size="20" textLength="140" lengthAdjust="spacingAndGlyphs">Quantity By tax</text>
<g fill="#4a0552"><rect x="132" y="765.500" width="92" height="20.500"/><rect x="132" y="792" width="56.500" height="20"/><rect x="132" y="818" width="192.500" height="20.500"/><rect x="132" y="844" width="207" height="20.500"/><rect x="132" y="870" width="319" height="20.500"/></g>
<text class="lb" x="232.500" y="780.500">105</text><text class="lb" x="196" y="806.500">64</text><text class="lb" x="332.500" y="833.500">219</text><text class="lb" x="348" y="859">236</text><text class="lb" x="459.500" y="885">363</text>
<text class="ax" x="132" y="906">0</text><text class="ax" x="220.500" y="906">100</text><text class="ax" x="308" y="906">200</text><text class="ax" x="396" y="906">300</text><text class="ax" x="483.500" y="906">400</text>
<text class="ax" x="118" y="807">4</text><text class="ax" x="118" y="858.500">2</text>
<text x="340" y="924" font-size="12" class="m" style="fill:#0f2a4a">Sum of Tax 5%</text>
<text font-size="12" class="m" transform="translate(105 830) rotate(-90)" style="fill:#0b2240">Order Quantity</text>

<!-- retail price -->
<text class="seb m" x="822.500" y="747" font-size="20" textLength="215" lengthAdjust="spacingAndGlyphs">Retail Price By Quantity</text>
<path d="M660.500 776.500L751 853 843.500 866.500 934 884 1026.500 883V890H660.500z" fill="#5ea23b" fill-opacity=".42"/>
<path d="M660.500 776.500L751 853 843.500 866.500 934 884 1026.500 883" fill="none" stroke="#5ea23b" stroke-width="3"/>
<text class="lb m" x="663.500" y="775.500">3.6K</text><text class="lb m" x="752.500" y="845.500">1.2K</text><text class="lb m" x="843" y="859.500">0.7K</text><text class="lb m" x="934.500" y="876.500">0.2K</text><text class="lb m" x="1022.500" y="875.500">0.2K</text>
<text class="ax" x="633" y="771">4K</text><text class="ax" x="633" y="832.500">2K</text><text class="ax" x="633" y="894.500">0K</text>
<text class="ax" x="660.500" y="906">1</text><text class="ax" x="752" y="906">2</text><text class="ax" x="843" y="906">3</text><text class="ax" x="934.500" y="906">4</text><text class="ax" x="1026" y="906">5</text>
<text x="842" y="924" font-size="12" class="m" style="fill:#0f2a4a">Order Quantity</text>
<text font-size="12" class="m" transform="translate(617 830) rotate(-90)" style="fill:#0b2240">Sum of Retail Price</text>

<!-- total by customer -->
<text class="seb m" x="1231" y="747" font-size="20" textLength="165" lengthAdjust="spacingAndGlyphs">Total By Customer</text>
<g fill="#5e1519"><rect x="1183" y="774" width="107.500" height="16"/><rect x="1183" y="795" width="101.500" height="16"/><rect x="1183" y="816" width="94.500" height="16"/><rect x="1183" y="837" width="79.500" height="16"/><rect x="1183" y="858" width="65.500" height="16"/><rect x="1183" y="879" width="65.500" height="16"/><rect x="1183" y="900" width="63.500" height="16"/></g>
<text class="lb e" x="1173.500" y="786.500">Jennifer ...</text><text class="lb e" x="1173.500" y="807.500">Michael ...</text><text class="lb e" x="1173.500" y="828.500">David Wi...</text><text class="lb e" x="1173.500" y="849.500">Jessica ...</text><text class="lb e" x="1173.500" y="870.500">David R...</text><text class="lb e" x="1173.500" y="891.500">Emily Br...</text><text class="lb e" x="1173.500" y="912.500">Sarah G...</text>
<text class="lb" x="1298.500" y="786.500">539</text><text class="lb" x="1292" y="807.500">506</text><text class="lb" x="1285" y="828.500">473</text><text class="lb" x="1270" y="849.500">396</text><text class="lb" x="1257" y="870.500">330</text><text class="lb" x="1257" y="891.500">330</text><text class="lb" x="1254.500" y="912.500">319</text>
<text class="lb m" transform="translate(1088 845) rotate(-90)" style="font-size:11px" textLength="79" lengthAdjust="spacingAndGlyphs">Customer Name</text>
<rect x="1373" y="765" width="8" height="160" rx="4" fill="#76879a"/><rect x="1373.500" y="765.500" width="7" height="22" rx="3.500" fill="#4a5b6d" stroke="#dfe7ee"/>
</g>

<!-- filters pane -->
<path d="M1449 217l-7 6.500 7 6.500M1456 217l-7 6.500 7 6.500" fill="none" stroke="#252423" stroke-width="1.500"/>
<path d="M1458 252v15l-13-7.500z" fill="none" stroke="#252423" stroke-width="1.300"/>
<text font-size="17" font-weight="700" transform="translate(1442 277) rotate(90)" textLength="53">Filters</text>

<!-- viz pane -->
<text x="1479" y="232" font-size="18" font-weight="700" style="fill:#3a3938" textLength="123">Visualizations</text>
<path d="M1670 218l7 7-7 7M1676 218l7 7-7 7" fill="none" stroke="#252423" stroke-width="1.500"/>
<text x="1479" y="263" font-size="14" textLength="77" font-weight="700" style="fill:#3b3a39">Build visual</text>
<rect x="1479" y="272" width="40" height="40" rx="2" fill="#c8c6c4"/>
<path d="M1484 278h24" stroke="#333" stroke-width="1.200"/>
<rect x="1484.500" y="283.500" width="29" height="10" fill="#117865" stroke="#222" stroke-dasharray="2 1.500"/>
<rect x="1484.500" y="297.500" width="29" height="10" fill="#117865" stroke="#222" stroke-dasharray="2 1.500"/>
<g fill="none" stroke="#333" stroke-width="1.300"><path d="M1588 287l-8-9h-12.500v29h6M1580 278v8h8"/><path d="M1597 291l-15 14c-3 2-6 2-8 2 2-1 3-4 5-6l15-13z"/></g>
<path d="M1469 327H1489L1499 318 1509 327H1694" fill="none" stroke="#a6a4a2"/>

<!-- viz icon grid -->
<g transform="translate(1482 341.500)"><use href="#ax"/><rect class="b" x="3" y="3" width="10" height="5"/><rect class="g" x="13" y="3" width="6" height="5" opacity=".6"/><rect class="b" x="3" y="10" width="6" height="5"/><rect class="g" x="9" y="10" width="12" height="5"/><rect x="3" y="17" width="20" height="3" fill="none" stroke="#4b4b4b"/></g>
<g transform="translate(1517 341.500)"><use href="#ax"/><rect class="b" x="5" y="11" width="4" height="11"/><rect x="5" y="5" width="5" height="17" fill="none" stroke="#4b4b4b"/><rect class="g" x="14" y="2" width="8" height="20"/><rect x="14" y="2" width="8" height="20" fill="none" stroke="#4b4b4b"/></g>
<g transform="translate(1552 341.500)"><use href="#ax"/><rect class="b" x="2" y="2" width="20" height="6"/><rect x="2" y="10" width="12" height="5" fill="none" stroke="#4b4b4b"/><rect class="g" x="2" y="17" width="14" height="4"/></g>
<g transform="translate(1587 341.500)"><use href="#ax"/><rect class="b" x="3" y="2" width="5" height="20"/><rect x="9" y="11" width="4" height="11" fill="none" stroke="#4b4b4b"/><rect class="g" x="15" y="8" width="3" height="14"/><rect x="19" y="8" width="3" height="14" fill="none" stroke="#4b4b4b"/></g>
<g transform="translate(1622 341.500)"><use href="#ax"/><rect class="b" x="2" y="2" width="18" height="5"/><rect class="b" x="2" y="10" width="12" height="5"/><rect class="g" x="14" y="10" width="8" height="5"/><rect x="2" y="17" width="20" height="4" fill="none" stroke="#4b4b4b"/></g>
<g transform="translate(1657 341.500)"><use href="#ax"/><rect class="b" x="4" y="1" width="6" height="13"/><rect x="4" y="14" width="6" height="8" fill="none" stroke="#4b4b4b"/><rect class="g" x="14" y="3" width="7" height="9"/><rect x="14" y="12" width="7" height="10" fill="none" stroke="#4b4b4b"/></g>

<g transform="translate(1482 376.500)"><use href="#ax"/><path d="M3 15l6-6 4 5 10-9M3 19l7-7 4 3 9-7" fill="none" stroke="#4b4b4b" stroke-width="1.200"/><path d="M3 13l5-3 5 5 4-5 6 1" fill="none" stroke="#8a8a8a"/></g>
<g transform="translate(1517 376.500)"><path d="M1 23V19L9 5 15 13 20 1 24 19V23z" class="g"/><path d="M1 23V17L8 9 16 19 18 16 24 23z" class="b"/><path d="M1 23H24" class="k"/></g>
<g transform="translate(1552 376.500)"><use href="#ax"/><path d="M2 3l7 9 5-4 9 8v5H2z" class="b" opacity=".75"/><path d="M2 3l7 9 5-4 9 8" class="k"/></g>
<g transform="translate(1587 376.500)"><use href="#ax"/><path d="M2 3H24V15L14 9 7 17 2 12z" class="b"/></g>
<g transform="translate(1622 376.500)"><use href="#ax"/><rect class="b" x="4" y="4" width="5" height="18"/><rect class="g" x="13" y="2" width="6" height="20"/><path d="M2 18l7-6 5 6 8-8" class="k"/></g>
<g transform="translate(1657 376.500)"><use href="#ax"/><rect class="b" x="4" y="12" width="5" height="10"/><rect class="b" x="9" y="2" width="5" height="20"/><rect class="g" x="15" y="6" width="7" height="16"/><path d="M2 19l7-7 5 6 9-9" class="k"/></g>

<g transform="translate(1482 411.500)"><use href="#ax"/><path d="M2 5l7 3 6-1 8-3v5l-8 4-6 1-7-3z" fill="#9c9a98"/><path d="M2 12l8 5 5-6 8 3v4l-8-1-5 4-8-4z" class="b"/><path d="M2 16c6 2 7 5 10 5s5-5 11-5" fill="none" stroke="#e5a53a" stroke-width="2"/></g>
<g transform="translate(1517 411.500)"><use href="#ax"/><rect x="4" y="10" width="5" height="12" fill="none" stroke="#4b4b4b"/><rect class="b" x="10" y="7" width="5" height="5"/><rect x="16" y="2" width="6" height="20" fill="none" stroke="#4b4b4b"/></g>
<g transform="translate(1552 411.500)"><rect class="b" x="1" y="1" width="23" height="8" stroke="#2f75a8"/><rect class="b" x="5" y="9" width="15" height="7" stroke="#2f75a8"/><rect class="b" x="8" y="16" width="9" height="7" stroke="#2f75a8"/></g>
<g transform="translate(1587 411.500)"><use href="#ax"/><g class="b"><rect x="5" y="5" width="4" height="4"/><rect x="12" y="10" width="4" height="4"/><rect x="18" y="15" width="4" height="4"/></g><g class="dk"><rect x="20" y="2" width="3" height="3"/><rect x="5" y="17" width="3" height="3"/></g></g>
<g transform="translate(1622 411.500)"><circle cx="12" cy="12" r="11" fill="#fff" stroke="#4b4b4b" stroke-width="1.300"/><path d="M12 1a11 11 0 0 1 8 19l-8-8z" class="b"/></g>
<g transform="translate(1657 411.500)"><circle cx="12" cy="12" r="9" fill="none" stroke="#4a9bd8" stroke-width="5"/><path d="M3 12a9 9 0 0 1 9-9" fill="none" stroke="#bdbdbd" stroke-width="4"/></g>

<g transform="translate(1482 446.500)"><rect class="b" x="0" y="0" width="11" height="12"/><rect class="b" x="0" y="13" width="11" height="11"/><rect x="12" y="0" width="11" height="8" fill="none" stroke="#4b4b4b"/><rect x="12" y="9" width="5" height="15" fill="none" stroke="#4b4b4b"/><rect x="18" y="9" width="5" height="15" fill="none" stroke="#4b4b4b"/></g>
<g transform="translate(1517 446.500)"><circle cx="12" cy="10" r="8" fill="#4f9a55" stroke="#333"/><path d="M8 5l4 2 4-2 1 4-4 3-3-1zM10 13l3 1-1 3z" fill="#fff"/><path d="M20 5a10 10 0 0 1-12 15M6 22h12M12 20v2" fill="none" stroke="#4b4b4b" stroke-width="1.300"/></g>
<g transform="translate(1552 446.500)"><path d="M1 2l8 2 4-2 10 1v12l-5 5-6 3-4-4-6-2-2-7z" class="b" stroke="#4b4b4b"/><path d="M13 2l10 1v12l-5 5-4-2-1-8z" fill="#9c9a98" stroke="#4b4b4b"/></g>
<g transform="translate(1587 446.500)"><path d="M15 0L24 24 15 18z" fill="#2f86c8"/><path d="M15 0V18L2 21z" class="b"/></g>
<g transform="translate(1622 446.500)"><path d="M1 18a11 11 0 0 1 22 0h-6a5 5 0 0 0-10 0z" class="b" stroke="#4b4b4b"/><path d="M12 17l5-6" stroke="#333" stroke-width="2"/></g>
<g transform="translate(1657 446.500)"><rect x="1" y="3" width="22" height="18" fill="#fff" stroke="#4b4b4b" stroke-width="1.300"/><text x="12" y="17" font-size="12" class="m" style="fill:#3f8fcc">123</text></g>

<g transform="translate(1482 481.500)"><rect x="1" y="1" width="22" height="22" fill="#fff" stroke="#4b4b4b" stroke-width="1.300"/><path d="M5 5h2v14H5z" class="g"/><rect class="b" x="8" y="6" width="12" height="2"/><rect class="b" x="8" y="11" width="8" height="2"/><rect x="8" y="16" width="10" height="2" fill="#888"/></g>
<g transform="translate(1517 481.500)"><rect x="1" y="2" width="22" height="20" fill="#fff" stroke="#4b4b4b" stroke-width="1.300"/><path d="M7 7l-4 7h8z" fill="#5ea23b"/><path d="M13 7l4 7 4-7z" fill="#d9534f"/><path d="M4 17h16" stroke="#888"/></g>
<g transform="translate(1552 481.500)"><rect x="1" y="1" width="22" height="22" fill="#fff" stroke="#4b4b4b" stroke-width="1.300"/><rect x="1" y="1" width="22" height="4" fill="#8a8886"/><rect x="4" y="10" width="4" height="3" class="g"/><rect x="4" y="16" width="4" height="3" class="g"/><path d="M11 11h13l-5 6v7l-3-2v-5z" fill="#fff" stroke="#4b4b4b" stroke-width="1.300"/></g>
<g transform="translate(1587 481.500)"><rect x="1" y="1" width="22" height="22" fill="#fff" stroke="#777" stroke-width="1.300"/><path d="M1 5h22M1 11h22M1 17h22M8 1v22M16 1v22" stroke="#777"/></g>
<g transform="translate(1622 481.500)"><rect x="1" y="1" width="22" height="22" fill="#fff" stroke="#4b4b4b" stroke-width="1.300"/><rect x="1" y="1" width="22" height="5" fill="#888"/><rect class="b" x="8" y="9" width="14" height="6"/><rect class="b" x="2" y="16" width="14" height="6"/><path d="M1 9h22M1 16h22M8 6v17M16 6v17" stroke="#4b4b4b"/></g>
<text x="1668" y="502" font-size="21" font-weight="700" class="m" style="fill:#2f86c8">R</text>

<text x="1494" y="536" font-size="22" font-weight="700" class="m" style="fill:#2f86c8" textLength="24" lengthAdjust="spacingAndGlyphs">Py</text>
<g transform="translate(1517 516.500)"><use href="#ax"/><g stroke="#4b4b4b" stroke-width="1.200" fill="none"><path d="M3 6h14M3 13h8M3 19h6"/></g><circle cx="20" cy="5" r="3" class="b"/><circle cx="14" cy="13" r="2" class="g"/><circle cx="12" cy="19" r="2" class="g"/></g>
<g transform="translate(1552 516.500)"><rect class="b" x="0" y="9" width="8" height="6"/><rect class="b" x="14" y="1" width="10" height="6"/><rect class="b" x="14" y="9" width="10" height="6"/><rect class="b" x="14" y="17" width="10" height="6"/><path d="M8 12h3M11 4v16M11 4h3M11 12h3M11 20h3" class="k"/></g>
<g transform="translate(1587 516.500)"><path d="M1 2H23V18H10L5 23V18H1z" fill="#fff" stroke="#2f86c8" stroke-width="1.500"/></g>
<g transform="translate(1622 516.500)"><path d="M3 1h12l6 6v16H3z" fill="#fff" stroke="#4b4b4b" stroke-width="1.300"/><path d="M15 1v6h6" class="k"/><path d="M7 10h2M7 14h9M7 18h6" stroke="#3f8fcc" stroke-width="1.500"/></g>
<g transform="translate(1657 516.500)"><path d="M5 1h14v9a7 7 0 0 1-14 0zM5 3H1v4a4 4 0 0 0 4 4M19 3h4v4a4 4 0 0 1-4 4" fill="#fff" stroke="#4b4b4b" stroke-width="1.300"/><path d="M12 17v3" stroke="#4b4b4b" stroke-width="2"/><rect class="b" x="6" y="20" width="12" height="4"/></g>

<g transform="translate(1482 551.500)"><path d="M3 1h12l6 6v17H3z" fill="#fff" stroke="#4b4b4b" stroke-width="1.300"/><rect x="7" y="16" width="3" height="5" class="dk"/><rect x="11" y="13" width="3" height="8" class="dk"/><rect x="15" y="10" width="3" height="11" class="dk"/></g>
<g transform="translate(1517 551.500)"><rect x="1" y="5" width="23" height="18" fill="#fff" stroke="#4b4b4b" stroke-width="1.300"/><text x="14" y="20" font-size="11" class="m" style="fill:#3f8fcc">123</text><path d="M8 0L3 10h3l-3 6 8-9H8l3-7z" fill="#f2a23c" stroke="#c87a14" stroke-width=".5"/></g>
<g transform="translate(1552 551.500)"><rect x="6" y="3" width="18" height="14" fill="#fff" stroke="#777"/><rect x="1" y="11" width="11" height="12" fill="#fff" stroke="#777"/><path d="M11 13h13l-5 5v6l-3-1v-5z" fill="#fff" stroke="#4b4b4b" stroke-width="1.300"/><path d="M8 0L3 9h3l-2 6 7-9H8l3-6z" fill="#f2a23c"/></g>
<g transform="translate(1587 551.500)"><rect x="2" y="3" width="20" height="18" fill="#fff" stroke="#4b4b4b" stroke-width="1.300"/><text x="10" y="17" font-size="11" class="m" style="fill:#3f8fcc">A</text><path d="M11 13h13l-5 5v6l-3-1v-5z" fill="#fff" stroke="#4b4b4b" stroke-width="1.300"/><path d="M8 0L3 9h3l-2 6 7-9H8l3-6z" fill="#f2a23c"/></g>
<g transform="translate(1622 551.500)"><path d="M3 3h14l5 5v10H3z" fill="#fff" stroke="#4b4b4b" stroke-width="1.300"/><path d="M8 9h8M8 13h4" stroke="#888"/><path d="M11 13h13l-5 5v6l-3-1v-5z" fill="#fff" stroke="#4b4b4b" stroke-width="1.300"/><path d="M8 0L3 9h3l-2 6 7-9H8l3-6z" fill="#f2a23c"/></g>
<g transform="translate(1657 551.500)"><rect x="1" y="2" width="22" height="21" fill="#fff" stroke="#2f75a8" stroke-width="2"/><path d="M8 23c0-6 5-6 6-10s6-4 9-6v10c-4 1-5 6-8 6z" class="b"/><circle cx="5" cy="5" r="4.500" fill="#d9772b"/><path d="M1 7l4 8 4-8" fill="#d9772b"/><circle cx="20" cy="20" r="3.500" fill="#d9772b"/></g>

<g transform="translate(1482 586.500)"><path d="M12 1l11 11-11 11L1 12z" fill="none" stroke="#8a3bb5" stroke-width="1.600"/><path d="M6 7l6 5-6 5M18 7l-6 5 6 5M7 6l5 6 5-6M7 18l5-6 5 6" fill="none" stroke="#8a3bb5" stroke-width="1.300"/></g>
<g transform="translate(1517 586.500)"><path d="M1 2H13L23 12 13 22H1L11 12z" fill="none" stroke="#2f86c8" stroke-width="1.500"/><path d="M7 12l9-8M10 18l10-8" stroke="#2f86c8" stroke-width="1.500"/></g>
<g transform="translate(1552 586.500)"><path d="M8 20a6 8 0 1 1 9 0" fill="#efb0a8"/><path d="M4 20h17v2a3 3 0 0 1-3 2H7a3 3 0 0 1-3-2z" fill="#bdd0e2"/></g>
<g transform="translate(1587 586.500)"><rect x="1" y="16" width="6" height="7" fill="#d9342b"/><rect x="9" y="10" width="6" height="13" fill="#f2c14a"/><rect x="17" y="1" width="6" height="22" fill="#5ea23b"/><path d="M2 12l8-4 5 3 7-8" fill="none" stroke="#333"/></g>
<g fill="#333"><circle cx="1627" cy="595.500" r="1.200"/><circle cx="1634" cy="595.500" r="1.200"/><circle cx="1641" cy="595.500" r="1.200"/></g>

<path d="M1469 621.500H1694" stroke="#d8d6d4"/>
<text x="1484" y="648" font-size="14.500" style="fill:#3b3a39">Values</text>
<rect x="1474.500" y="659.500" width="212" height="34" fill="#fff" stroke="#c8c6c4" stroke-dasharray="3 2"/>
<text x="1488" y="681.500" font-size="14.500" style="fill:#323130" textLength="133">Add data fields here</text>
<text x="1484" y="723" font-size="14.500" style="fill:#3b3a39" textLength="87">Drill through</text>
<text x="1484" y="754" font-size="14.500" style="fill:#3b3a39" textLength="83">Cross-report</text>
<rect x="1627.500" y="739.500" width="39" height="19" rx="9.500" fill="#fff" stroke="#8a8886"/><circle cx="1637.500" cy="749" r="5" fill="#605e5c"/>
<text x="1645" y="754" font-size="12.500" style="fill:#605e5c">Off</text>
<text x="1484" y="787.500" font-size="14.500" style="fill:#3b3a39" textLength="92">Keep all filters</text>
<rect x="1627" y="773" width="40" height="20" rx="10" fill="#117865"/><circle cx="1656" cy="783" r="5" fill="#fff"/>
<text x="1632.500" y="788" font-size="12.500" style="fill:#fff">On</text>
<rect x="1474.500" y="806.500" width="212" height="31" fill="#fff" stroke="#c8c6c4" stroke-dasharray="3 2"/>
<text x="1485" y="827.500" font-size="14.500" style="fill:#323130" textLength="188">Add drill-through fields here</text>

<!-- data pane -->
<text x="1705.500" y="232" font-size="18" font-weight="700" style="fill:#3a3938" textLength="41">Data</text>
<path d="M1896 218l7 7-7 7M1902 218l7 7-7 7" fill="none" stroke="#252423" stroke-width="1.500"/>
<path d="M1910 257H1704.500a4 4 0 0 0-4 4v22a4 4 0 0 0 4 4H1910z" fill="#fff" stroke="#d1cfcd"/><path d="M1702 286.500H1910" stroke="#777"/>
<g fill="none" stroke="#555" stroke-width="1.300"><circle cx="1723" cy="271" r="6"/><path d="M1727.500 275.500l5.500 5.500"/></g>
<text x="1742.500" y="279.500" font-size="16" style="fill:#605e5c" textLength="51">Search</text>
<path d="M1715 307l6 6-6 6" fill="none" stroke="#555" stroke-width="1.200"/>
<g fill="none" stroke="#444" stroke-width="1.200"><rect x="1732" y="306" width="14" height="14" rx="1.500"/><path d="M1732 310.500h14M1732 315.500h14M1736.500 306v14M1741.500 306v14"/></g>
<text x="1754" y="318.500" font-size="14" style="fill:#484644" textLength="122">SuperMarket Sales</text>

<!-- page tabs -->
<path d="M51 990.500H1910" stroke="#e1dfdd"/>
<g fill="none" stroke="#555" stroke-width="1.500"><rect x="66" y="956" width="23" height="16"/><path d="M77.500 972v4M71 977h13"/></g>
<rect x="64" y="981" width="30" height="3" rx="1" fill="#117865"/>
<rect x="126" y="953" width="14.500" height="23" rx="1.500" fill="none" stroke="#555" stroke-width="1.500"/><circle cx="133" cy="973" r="1" fill="#555"/>
<path d="M174 961l-6 6 6 6zM196 961l6 6-6 6z" fill="#c8c6c4"/>
<rect x="210.500" y="946" width="94.500" height="44" fill="#fff"/><rect x="210.500" y="985" width="94.500" height="5" fill="#117865"/>
<text x="258" y="973" font-size="14.500" class="m" textLength="44">Page 1</text>
<rect x="305" y="946" width="49" height="44" fill="#117865"/><path d="M329 959v15M321.500 966.500h15" stroke="#fff" stroke-width="3.500"/>

<!-- status -->
<text x="5" y="1011" font-size="14" style="fill:#605e5c" textLength="73">Page 1 of 1</text>
<path d="M1656 1005.500h5" stroke="#444" stroke-width="1.500"/><path d="M1666.500 1005.500H1792" stroke="#555"/><rect x="1714.500" y="999" width="5" height="13" fill="#555"/><path d="M1729.500 1002v7" stroke="#555"/>
<path d="M1799 1005.500h9M1803.500 1001v9" stroke="#444" stroke-width="1.500"/>
<text x="1825" y="1011" font-size="14" style="fill:#605e5c" textLength="28">82%</text>
<rect x="1878.500" y="999.500" width="19" height="14" fill="#e8e6e4" stroke="#666"/><path d="M1882 1005v-3h3M1894 1005v-3h-3M1882 1008v3h3M1894 1008v3h-3" fill="none" stroke="#555"/>

<!-- Arabic watermark -->
<text x="955" y="1015" font-size="62" font-weight="700" class="m" style="font-family:'DejaVu Sans',sans-serif;fill:#dedede;stroke:#dedede;stroke-width:3.500" textLength="212" lengthAdjust="spacingAndGlyphs">نفذلي</text>

<!-- taskbar -->
<rect y="1018" width="1910" height="58" fill="#1a1a1a"/><rect y="1018" width="1910" height="1.500" fill="#000"/>
<g fill="url(#win)"><rect x="475.500" y="1036" width="13.500" height="13.500"/><rect x="490.500" y="1036" width="13.500" height="13.500"/><rect x="475.500" y="1051" width="13.500" height="13.500"/><rect x="490.500" y="1051" width="13.500" height="13.500"/></g>
<rect x="521" y="1030" width="274" height="40" rx="20" fill="#3d3d3d"/>
<g fill="none" stroke="#ddd" stroke-width="1.600"><circle cx="544" cy="1048" r="7"/><path d="M548.500 1053.500l5 6"/></g>
<text x="567.500" y="1056" font-size="16" style="fill:#d6d6d6" textLength="51">Search</text>
<ellipse cx="759" cy="1050" rx="24" ry="18" fill="#8b7fcf"/><ellipse cx="759" cy="1040" rx="23" ry="8" fill="#e3dfe6"/><ellipse cx="759" cy="1056" rx="20" ry="11" fill="#5b66b5"/><g fill="#2b2a55"><circle cx="746" cy="1039" r="2.500"/><circle cx="759" cy="1037" r="2.500"/><circle cx="772" cy="1039" r="2.500"/></g>
<rect x="812" y="1043" width="14" height="20" rx="2" fill="#888"/><rect x="818" y="1037" width="15" height="18" rx="2" fill="#eee"/>
<path d="M868 1036l11-3 11 3 2 12-6 13-7 4-7-4-6-13z" fill="#f0522a"/><path d="M872 1044l7-4 7 4-2 10-5 4-5-4z" fill="#fff" fill-opacity=".9"/>
<path d="M921 1040h12l3 3h15v19h-30z" fill="#f5c84a"/><rect x="921" y="1047" width="30" height="15" fill="#e8ac1f"/><rect x="925" y="1054" width="22" height="4" fill="#2b8fd8"/>
<circle cx="990" cy="1048" r="14" fill="#3a3ad8"/><text x="990" y="1053" font-size="12" font-weight="700" class="m" style="fill:#fff">ISP</text>
<circle cx="1042" cy="1042" r="6" fill="#8a8ff0"/><circle cx="1053" cy="1044" r="4.500" fill="#6b70d8"/><rect x="1033" y="1048" width="17" height="17" rx="4" fill="#7b7fe8"/><rect x="1048" y="1049" width="11" height="14" rx="3" fill="#5f64cc"/>
<path d="M1100 1034l8 5 5 8-4 8-4 4 4 4-9 4-9-4 4-4-4-4-4-8 5-8zM1100 1042l-5 6 5 7 5-7z" fill="#2b8ff0" fill-rule="evenodd"/>
<circle cx="1156" cy="1049" r="14" fill="#2ea3dd"/><path d="M1148 1049l15-6-3 14-4-3-2 3-1-5 6-5-8 4z" fill="#fff"/>
<circle cx="1167" cy="1039" r="9" fill="#e23b35"/><text x="1167" y="1044" font-size="13" class="m" style="fill:#fff">1</text>
<circle cx="1156" cy="1072" r="2.500" fill="#999"/>
<circle cx="1211.500" cy="1049" r="12.500" fill="none" stroke="#27c266" stroke-width="3"/><path d="M1202 1060l-3 6 7-2z" fill="#27c266"/><path d="M1207 1043c0 5 4 9 10 11l2-3-3-2-2 1-3-3 1-2-2-3z" fill="#27c266"/>
<circle cx="1266" cy="1049" r="14.500" fill="#1ed760"/><g fill="none" stroke="#151515" stroke-width="2.300" stroke-linecap="round"><path d="M1258 1044c6-1.500 12-1 17 2M1259 1049c5-1 10-.5 14 2M1260 1054c4-.8 8-.3 11 1.500"/></g>
<circle cx="1320" cy="1050" r="14.500" fill="#d94032"/><path d="M1320 1035.500a14.500 14.500 0 0 1 12.500 7H1320zM1332.500 1043a14.500 14.500 0 0 1-12 21l5-12z" fill="#f3c12f"/><path d="M1308 1058a14.500 14.500 0 0 0 12 6.500l4-9z" fill="#3aa757"/><circle cx="1320" cy="1050" r="6.500" fill="#3d87e8" stroke="#fff" stroke-width="2"/>
<circle cx="1331.500" cy="1038" r="9.500" fill="#8a8a5a"/><circle cx="1320" cy="1072" r="2.500" fill="#999"/>
<path d="M1364 1037l24-4v33h-24z" fill="#2b7fd4"/><path d="M1366 1066l8-18 7 10 6-6v14z" fill="#5fd0f0"/><circle cx="1382" cy="1040" r="2.500" fill="#fff"/>
<circle cx="1376" cy="1072" r="2.500" fill="#999"/>
<rect x="1406" y="1025" width="49" height="49" rx="4" fill="#2a2a2a"/>
<rect x="1420" y="1050" width="8" height="16" fill="url(#pbi)"/><rect x="1426" y="1041" width="8" height="25" fill="url(#pbi)"/><rect x="1434" y="1035" width="9" height="31" fill="url(#pbi)"/>
<rect x="1421" y="1071" width="20" height="3" rx="1.500" fill="#f0555b"/>
<path d="M1627 1054l6-6 6 6" fill="none" stroke="#fff" stroke-width="1.800"/>
<text x="1680.500" y="1056" font-size="14" class="m" style="fill:#eee">ENG</text>
<g fill="none" stroke="#eee" stroke-width="1.300"><path d="M1719 1047a12 12 0 0 1 18 0M1722 1051a8 8 0 0 1 12 0M1725 1054.500a4 4 0 0 1 6 0"/></g><circle cx="1728" cy="1058" r="1.500" fill="#fff"/>
<g fill="none" stroke="#eee" stroke-width="1.300"><path d="M1749 1047h4l5-5v16l-5-5h-4zM1761 1046a6 6 0 0 1 0 8M1764 1043a10 10 0 0 1 0 14"/></g>
<g fill="none" stroke="#eee" stroke-width="1.300"><rect x="1781" y="1045" width="15" height="11" rx="2"/><path d="M1796 1048v5"/></g><path d="M1786 1041l-4 7h3l-2 6 5-8h-3l2-5z" fill="#fff"/>
<text x="1895" y="1044" font-size="14.500" class="e" style="fill:#fff" textLength="55">5:09 AM</text>
<text x="1895" y="1065" font-size="14.500" class="e" style="fill:#fff" textLength="76">10/28/2025</text>

<!-- watermark latin -->
<text x="857" y="1066" font-size="34" style="font-family:'DejaVu Sans',sans-serif;fill:#d4d4d4;fill-opacity:.9;stroke:#d4d4d4;stroke-width:.5" textLength="197" lengthAdjust="spacingAndGlyphs">nafezly.com</text>
</svg>
</body></html>
